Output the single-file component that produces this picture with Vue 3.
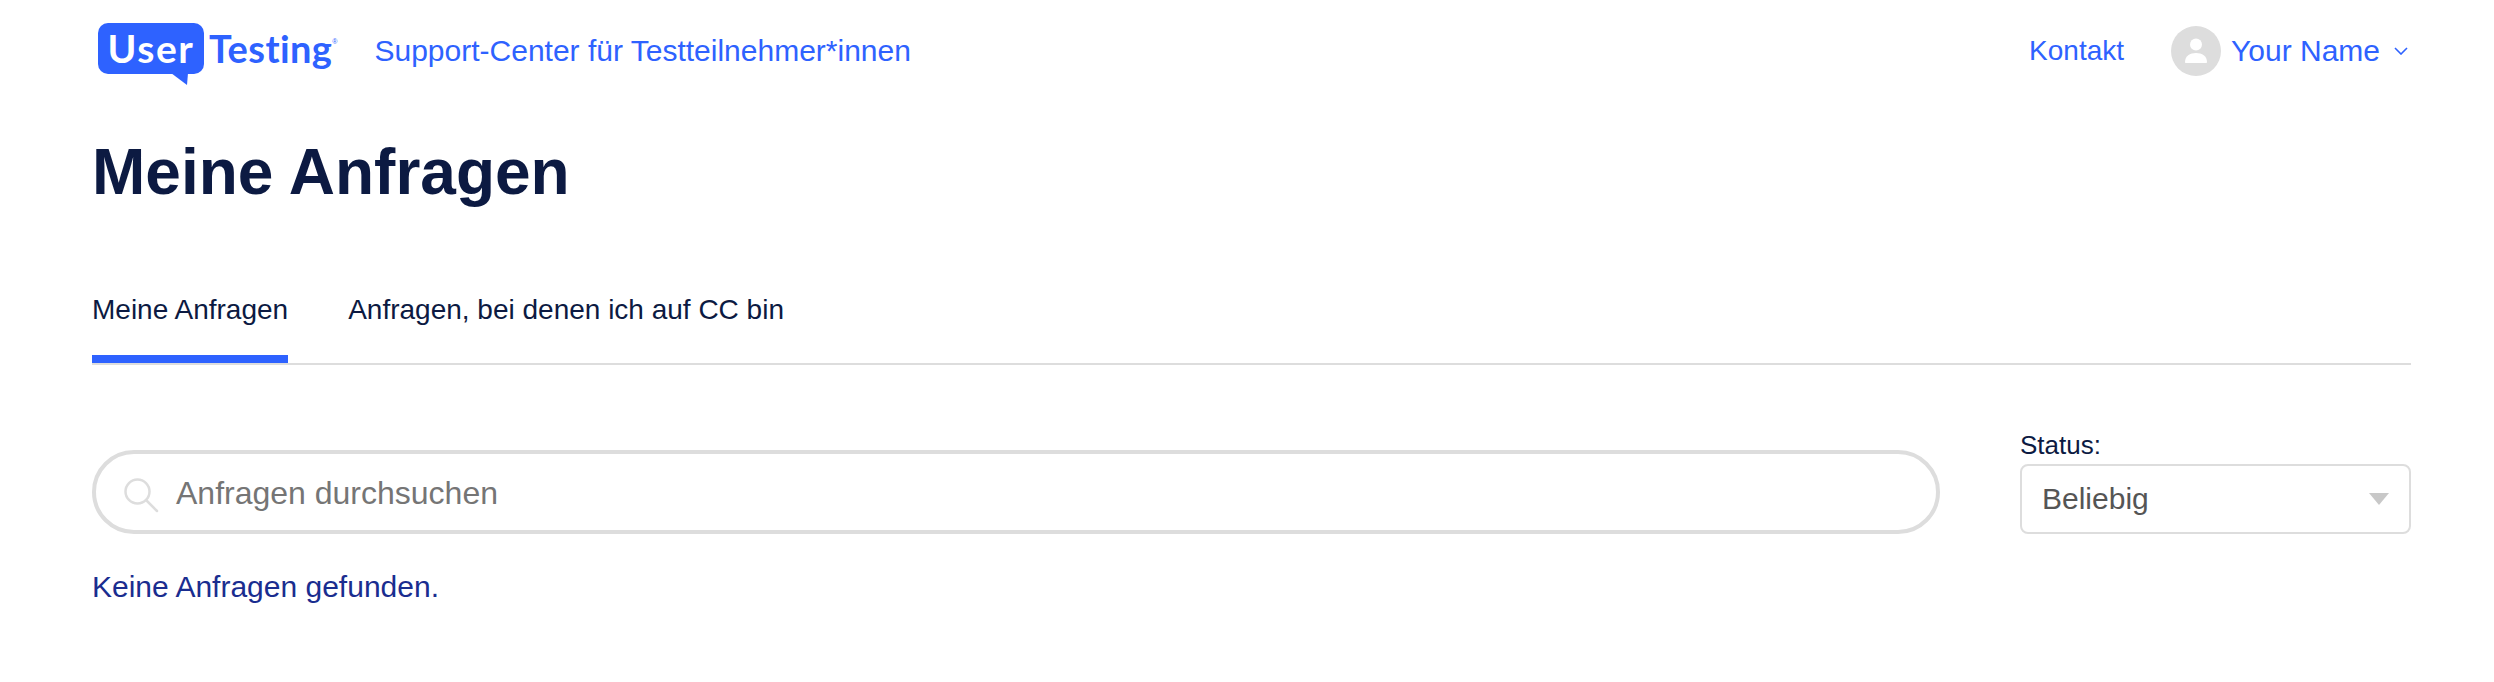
<template>
  <div class="page">
    <header class="top">
      <a class="brand">
        <span class="logo">
          <span class="logo-box">User</span>
          <svg class="logo-tail" width="18" height="12" viewBox="0 0 18 12"><path d="M0 0H17L16 12Z" fill="#2e62ff" /></svg>
          <span class="logo-word">Testing</span>
          <span class="logo-reg">®</span>
        </span>
        <span class="brand-text">Support-Center für Testteilnehmer*innen</span>
      </a>
      <nav class="top-nav">
        <a class="contact">Kontakt</a>
        <a class="user">
          <span class="avatar">
            <svg width="50" height="50" viewBox="0 0 50 50">
              <circle cx="25" cy="18.5" r="6" fill="#fff" />
              <path d="M14 36c0-6 5-9 11-9s11 3 11 9c0 .6-.4 1-1 1H15c-.6 0-1-.4-1-1Z" fill="#fff" />
            </svg>
          </span>
          <span class="user-name">Your Name</span>
          <svg class="chev" width="14" height="8" viewBox="0 0 14 8"><path d="M1 1l6 6 6-6" fill="none" stroke="#2e62ff" stroke-width="1.6" /></svg>
        </a>
      </nav>
    </header>

    <h1 class="title">Meine Anfragen</h1>

    <ul class="tabs">
      <li v-for="(tab, i) in tabs" :key="tab" class="tab" :class="{ active: i === 0 }">{{ tab }}</li>
    </ul>

    <div class="filters">
      <div class="search">
        <svg class="search-icon" width="36" height="36" viewBox="0 0 36 36">
          <circle cx="14.5" cy="14.5" r="12" fill="none" stroke="#ddd" stroke-width="2.5" />
          <path d="M23.5 23.5L34 34" stroke="#ddd" stroke-width="2.5" stroke-linecap="round" />
        </svg>
        <span class="placeholder">Anfragen durchsuchen</span>
      </div>
      <div class="status">
        <label class="status-label">Status:</label>
        <div class="select">
          <span>Beliebig</span>
          <span class="caret"></span>
        </div>
      </div>
    </div>

    <p class="empty">Keine Anfragen gefunden.</p>
  </div>
</template>

<script setup>
const tabs = ["Meine Anfragen", "Anfragen, bei denen ich auf CC bin"];
</script>

<style>
html,
body {
  margin: 0;
  background: #fff;
}
</style>

<style scoped>
.page {
  width: 2319px;
  height: 682px;
  margin-left: 92px;
  font-family: "Liberation Sans", Arial, sans-serif;
  overflow: hidden;
}

.top {
  display: flex;
  justify-content: space-between;
  align-items: center;
  height: 102px;
}

.brand {
  display: flex;
  align-items: center;
  padding-left: 6px;
}

.logo {
  position: relative;
  display: flex;
  align-items: center;
  height: 52px;
  margin-top: -6px;
}

.logo-box {
  display: flex;
  align-items: center;
  justify-content: center;
  width: 106px;
  height: 51px;
  background: #2e62ff;
  border-radius: 10px;
  color: #fff;
  font-family: Lato, sans-serif;
  font-weight: 700;
  font-size: 39px;
  letter-spacing: 1.6px;
}

.logo-tail {
  position: absolute;
  left: 73px;
  top: 51px;
}

.logo-word {
  margin-left: 5px;
  color: #2e62ff;
  font-family: Lato, sans-serif;
  font-weight: 700;
  font-size: 38px;
  letter-spacing: 0.4px;
}

.logo-reg {
  color: #2e62ff;
  font-size: 7px;
  align-self: flex-start;
  margin-top: 16px;
}

.brand-text {
  margin-left: 37px;
  color: #2e62ff;
  font-size: 30px;
}

.top-nav {
  display: flex;
  align-items: center;
}

.contact {
  color: #2e62ff;
  font-size: 28px;
  margin-right: 47px;
}

.user {
  display: flex;
  align-items: center;
  color: #2e62ff;
}

.avatar {
  display: block;
  width: 50px;
  height: 50px;
  border-radius: 50%;
  background: #ddd;
}

.avatar svg {
  display: block;
}

.user-name {
  margin-left: 10px;
  font-size: 30px;
}

.chev {
  margin-left: 14px;
  margin-right: 3px;
}

.title {
  margin: 34px 0 0;
  color: #0c1a42;
  font-size: 64px;
  font-weight: 700;
  line-height: 72px;
}

.tabs {
  display: flex;
  gap: 60px;
  list-style: none;
  margin: 72px 0 0;
  padding: 0;
  height: 83px;
  border-bottom: 2px solid #ddd;
  box-sizing: content-box;
}

.tab {
  color: #0c1a42;
  font-size: 28px;
  line-height: 40px;
  padding-top: 10px;
  height: 83px;
  box-sizing: border-box;
}

.tab.active {
  border-bottom: 8px solid #2e62ff;
}

.filters {
  display: flex;
  align-items: flex-end;
  justify-content: space-between;
  margin-top: 66px;
}

.search {
  display: flex;
  align-items: center;
  width: 1848px;
  height: 84px;
  box-sizing: border-box;
  border: 4px solid #ddd;
  border-radius: 42px;
  padding-left: 27px;
}

.search-icon {
  margin-top: 6px;
}

.placeholder {
  margin-left: 17px;
  padding-top: 2px;
  color: #757575;
  font-size: 32px;
}

.status {
  width: 391px;
}

.status-label {
  display: block;
  color: #0c1a42;
  font-size: 26px;
  line-height: 28px;
  margin-bottom: 5px;
}

.select {
  display: flex;
  align-items: center;
  justify-content: space-between;
  height: 70px;
  box-sizing: border-box;
  border: 2px solid #ddd;
  border-radius: 8px;
  padding: 0 20px;
  color: #555;
  font-size: 30px;
}

.caret {
  width: 0;
  height: 0;
  border-left: 10px solid transparent;
  border-right: 10px solid transparent;
  border-top: 12px solid #c8c8c8;
}

.empty {
  margin: 33px 0 0;
  color: #1a2d8f;
  font-size: 30px;
  line-height: 40px;
}
</style>
